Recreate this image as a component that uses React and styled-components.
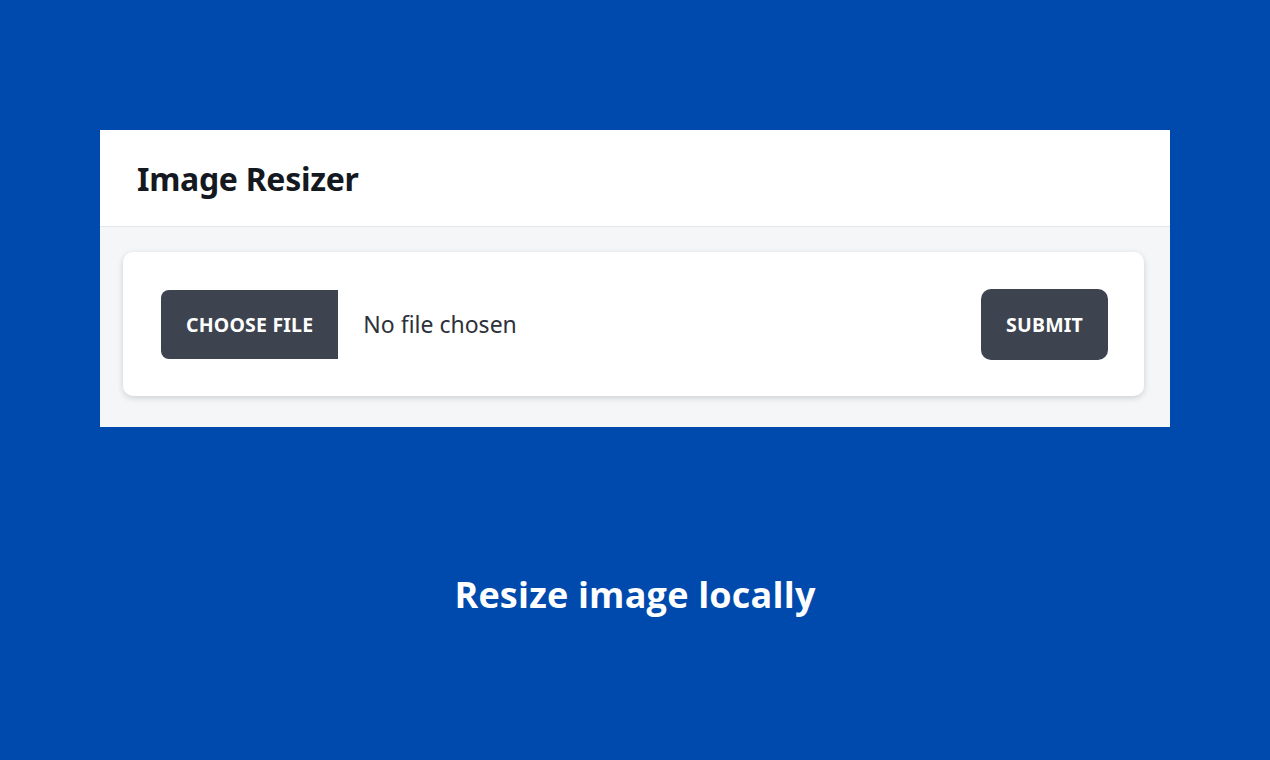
import styled, { createGlobalStyle } from "styled-components";

const GlobalStyle = createGlobalStyle`
  html, body {
    margin: 0;
    padding: 0;
    background: #004aad;
  }
  body {
    font-family: "Noto Sans", "Open Sans", sans-serif;
  }
`;

const Page = styled.div`
  width: 1270px;
  height: 760px;
  display: flex;
  flex-direction: column;
  align-items: center;
  padding-top: 130px;
  box-sizing: border-box;
`;

const Panel = styled.div`
  width: 1070px;
  background: #f5f6f8;
`;

const Header = styled.div`
  height: 97px;
  background: #ffffff;
  border-bottom: 1px solid #e4e6ea;
  display: flex;
  align-items: center;
  padding-left: 37px;
  box-sizing: border-box;
`;

const Title = styled.h1`
  margin: 0;
  font-size: 32px;
  font-weight: 700;
  color: #141821;
  letter-spacing: -0.3px;
`;

const Body = styled.div`
  padding: 25px 26px 31px 23px;
`;

const Card = styled.div`
  height: 144px;
  background: #ffffff;
  border-radius: 10px;
  box-shadow: 0 2px 6px rgba(0, 0, 0, 0.16);
  display: flex;
  align-items: center;
  justify-content: space-between;
  padding: 0 36px 0 38px;
  box-sizing: border-box;
`;

const FileRow = styled.div`
  display: flex;
  align-items: center;
  gap: 25px;
`;

const Button = styled.button`
  height: ${(p) => p.h}px;
  padding: 0 ${(p) => p.px}px;
  border: none;
  border-radius: ${(p) => (p.left ? "8px 0 0 8px" : "10px")};
  background: #3d4450;
  color: #ffffff;
  font-family: "Noto Sans", "Open Sans", sans-serif;
  font-size: 19.5px;
  font-weight: 700;
  letter-spacing: 0.2px;
  text-transform: uppercase;
  cursor: pointer;
`;

const FileName = styled.span`
  font-size: 23px;
  color: #2c313a;
`;

const Caption = styled.div`
  margin-top: 143px;
  font-family: "Open Sans", "Noto Sans", sans-serif;
  font-size: 36px;
  font-weight: 700;
  color: #ffffff;
  letter-spacing: 0.2px;
`;

export default function App() {
  return (
    <>
      <GlobalStyle />
      <Page>
        <Panel>
          <Header>
            <Title>Image Resizer</Title>
          </Header>
          <Body>
            <Card>
              <FileRow>
                <Button left h={69} px={25}>
                  Choose File
                </Button>
                <FileName>No file chosen</FileName>
              </FileRow>
              <Button h={71} px={25}>
                Submit
              </Button>
            </Card>
          </Body>
        </Panel>
        <Caption>Resize image locally</Caption>
      </Page>
    </>
  );
}
